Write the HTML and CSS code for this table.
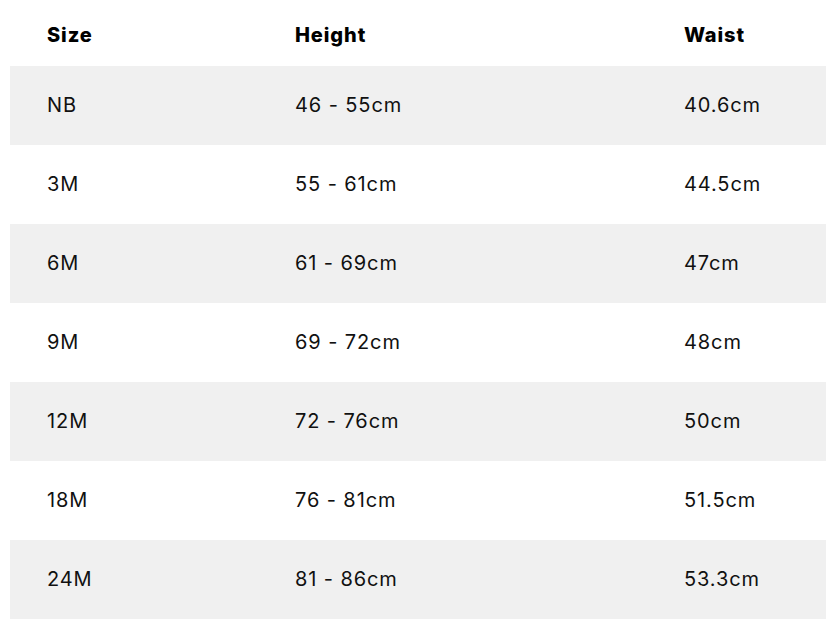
FILE: index.html
```html
<!DOCTYPE html>
<html>
<head>
<meta charset="utf-8">
<link rel="stylesheet" href="styles.css">
</head>
<body>
<table class="size-table">
  <colgroup>
    <col class="c1"><col class="c2"><col class="c3">
  </colgroup>
  <thead>
    <tr><th>Size</th><th>Height</th><th>Waist</th></tr>
  </thead>
  <tbody>
    <tr class="alt"><td>NB</td><td>46 - 55cm</td><td>40.6cm</td></tr>
    <tr><td>3M</td><td>55 - 61cm</td><td>44.5cm</td></tr>
    <tr class="alt"><td>6M</td><td>61 - 69cm</td><td>47cm</td></tr>
    <tr><td>9M</td><td>69 - 72cm</td><td>48cm</td></tr>
    <tr class="alt"><td>12M</td><td>72 - 76cm</td><td>50cm</td></tr>
    <tr><td>18M</td><td>76 - 81cm</td><td>51.5cm</td></tr>
    <tr class="alt"><td>24M</td><td>81 - 86cm</td><td>53.3cm</td></tr>
  </tbody>
</table>
</body>
</html>
```

FILE: styles.css
```css
html, body {
  margin: 0;
  padding: 0;
  background: #ffffff;
}
body {
  padding-left: 10px;
  font-family: Inter, "Noto Sans", sans-serif;
  color: #111111;
  overflow: hidden;
}
.size-table {
  border-collapse: collapse;
  width: 816px;
  table-layout: fixed;
}
.c1 { width: 248px; }
.c2 { width: 389px; }
.c3 { width: 179px; }
th, td {
  text-align: left;
  padding: 0 0 0 37px;
  white-space: nowrap;
  font-size: 20px;
  letter-spacing: 0.9px;
}
th {
  height: 66px;
  font-weight: 800;
  vertical-align: middle;
  padding-top: 4px;
  box-sizing: border-box;
  color: #000000;
}
td {
  height: 79px;
  font-weight: 400;
  padding-bottom: 2px;
  box-sizing: border-box;
}
tr.alt td {
  background: #f0f0f0;
}
```
